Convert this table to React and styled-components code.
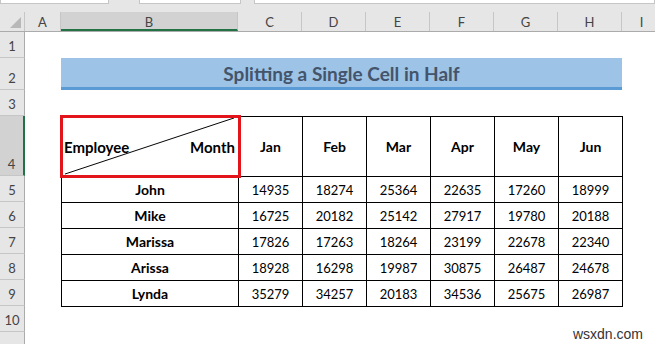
import React from 'react'
import styled, { createGlobalStyle } from 'styled-components'

const GlobalStyle = createGlobalStyle`
  html, body {
    margin: 0;
    padding: 0;
    background: #fff;
    overflow: hidden;
  }
`

const columns = [
  { label: 'A', width: 36 },
  { label: 'B', width: 177, selected: true },
  { label: 'C', width: 64 },
  { label: 'D', width: 64 },
  { label: 'E', width: 64 },
  { label: 'F', width: 64 },
  { label: 'G', width: 64 },
  { label: 'H', width: 64 },
  { label: 'I', width: 40 },
]

const rowHeights = [26, 32, 26, 60, 26, 26, 26, 26, 26, 26, 20]

const months = ['Jan', 'Feb', 'Mar', 'Apr', 'May', 'Jun']

const data = [
  { name: 'John', values: [14935, 18274, 25364, 22635, 17260, 18999] },
  { name: 'Mike', values: [16725, 20182, 25142, 27917, 19780, 20188] },
  { name: 'Marissa', values: [17826, 17263, 18264, 23199, 22678, 22340] },
  { name: 'Arissa', values: [18928, 16298, 19987, 30875, 26487, 24678] },
  { name: 'Lynda', values: [35279, 34257, 20183, 34536, 25675, 26987] },
]

const Window = styled.div`
  position: relative;
  width: 655px;
  height: 344px;
  overflow: hidden;
  background: #fff;
  font-family: Lato, 'Open Sans', sans-serif;
`

const TopStrip = styled.div`
  height: 12px;
  background: #e6e6e6;
  display: flex;
`

const StripBox = styled.div`
  height: 3px;
  width: ${p => (p.$width ? `${p.$width}px` : 'auto')};
  flex: ${p => (p.$width ? 'none' : '1')};
  margin-left: ${p => p.$gap || 0}px;
  background: #fff;
  border: 1px solid #c6c6c6;
  border-top: none;
`

const HeaderRow = styled.div`
  display: flex;
  height: 19px;
  background: #e6e6e6;
  border-bottom: 1px solid #ababab;
`

const Corner = styled.div`
  width: 25px;
  flex: none;
  position: relative;
  border-right: 1px solid #c6c6c6;
  box-sizing: border-box;

  &::after {
    content: '';
    position: absolute;
    right: 3px;
    bottom: 3px;
    border-style: solid;
    border-width: 0 0 11px 11px;
    border-color: transparent transparent #b8b8b8 transparent;
  }
`

const ColHead = styled.div`
  width: ${p => p.$width}px;
  flex: none;
  box-sizing: border-box;
  display: flex;
  align-items: center;
  justify-content: center;
  font-size: 13px;
  color: #444;
  border-right: 1px solid #c6c6c6;
  background: ${p => (p.$selected ? '#d2d2d2' : '#e6e6e6')};
  border-bottom: ${p => (p.$selected ? '2px solid #217346' : 'none')};
  padding-top: ${p => (p.$selected ? '2px' : '0')};
`

const Body = styled.div`
  display: flex;
`

const RowHeads = styled.div`
  width: 25px;
  flex: none;
  display: flex;
  flex-direction: column;
`

const RowHead = styled.div`
  height: ${p => p.$height}px;
  box-sizing: border-box;
  display: flex;
  align-items: flex-end;
  justify-content: center;
  padding-bottom: 3px;
  font-size: 13px;
  color: #444;
  background: ${p => (p.$selected ? '#d2d2d2' : '#e6e6e6')};
  border-bottom: 1px solid #c6c6c6;
  border-right: ${p => (p.$selected ? '2px solid #217346' : '1px solid #ababab')};
`

const Sheet = styled.div`
  flex: 1;
  padding-left: 36px;
  display: flex;
  flex-direction: column;
`

const Spacer = styled.div`
  height: ${p => p.$height}px;
`

const Title = styled.div`
  width: 561px;
  height: 32px;
  box-sizing: border-box;
  background: #9dc3e6;
  border-bottom: 3px solid #5b9bd5;
  display: flex;
  align-items: center;
  justify-content: center;
  padding-top: 2px;
  font-size: 19px;
  font-weight: 700;
  color: #44546a;
`

const Table = styled.table`
  border-collapse: collapse;
  table-layout: fixed;
  width: 561px;
  color: #000;
`

const Cell = styled.td`
  border: 1px solid #000;
  padding: 0;
  height: ${p => p.$height || 26}px;
  text-align: center;
  vertical-align: middle;
  font-size: ${p => (p.$bold ? 14 : 13)}px;
  font-weight: ${p => (p.$bold ? 700 : 400)};
  box-sizing: border-box;
  position: relative;
`

const SplitCell = styled.div`
  height: 100%;
  display: flex;
  align-items: center;
  justify-content: space-between;
  padding: 0 3px 0 2px;
  font-size: 15px;
  font-weight: 700;
`

const Diagonal = styled.svg`
  position: absolute;
  inset: 0;
  width: 100%;
  height: 100%;
  pointer-events: none;
`

const Highlight = styled.div`
  position: absolute;
  top: -2px;
  left: -2px;
  width: 181px;
  height: 63px;
  box-sizing: border-box;
  border: 3px solid #e3141c;
  pointer-events: none;
`

const Watermark = styled.div`
  position: absolute;
  right: 12px;
  bottom: 2px;
  font-family: 'Liberation Sans', Arial, sans-serif;
  font-size: 14px;
  color: #333;
`

export default function App() {
  return (
    <Window>
      <GlobalStyle />
      <TopStrip>
        <StripBox $width={107} />
        <StripBox $width={100} $gap={30} />
        <StripBox $gap={13} />
      </TopStrip>
      <HeaderRow>
        <Corner />
        {columns.map(c => (
          <ColHead key={c.label} $width={c.width} $selected={c.selected}>
            {c.label}
          </ColHead>
        ))}
      </HeaderRow>
      <Body>
        <RowHeads>
          {rowHeights.map((h, i) => (
            <RowHead key={i} $height={h} $selected={i === 3}>
              {i < 10 ? i + 1 : ''}
            </RowHead>
          ))}
        </RowHeads>
        <Sheet>
          <Spacer $height={26} />
          <Title>Splitting a Single Cell in Half</Title>
          <Spacer $height={26} />
          <Table>
            <colgroup>
              <col style={{ width: 177 }} />
              {months.map(m => (
                <col key={m} style={{ width: 64 }} />
              ))}
            </colgroup>
            <tbody>
              <tr>
                <Cell $height={60}>
                  <SplitCell>
                    <span>Employee</span>
                    <span>Month</span>
                  </SplitCell>
                  <Diagonal viewBox="0 0 177 60" preserveAspectRatio="none">
                    <line x1="3" y1="58" x2="173" y2="1" stroke="#000" strokeWidth="1" />
                  </Diagonal>
                  <Highlight />
                </Cell>
                {months.map(m => (
                  <Cell key={m} $height={60} $bold>
                    {m}
                  </Cell>
                ))}
              </tr>
              {data.map(row => (
                <tr key={row.name}>
                  <Cell $bold>{row.name}</Cell>
                  {row.values.map((v, i) => (
                    <Cell key={i}>{v}</Cell>
                  ))}
                </tr>
              ))}
            </tbody>
          </Table>
        </Sheet>
      </Body>
      <Watermark>wsxdn.com</Watermark>
    </Window>
  )
}
